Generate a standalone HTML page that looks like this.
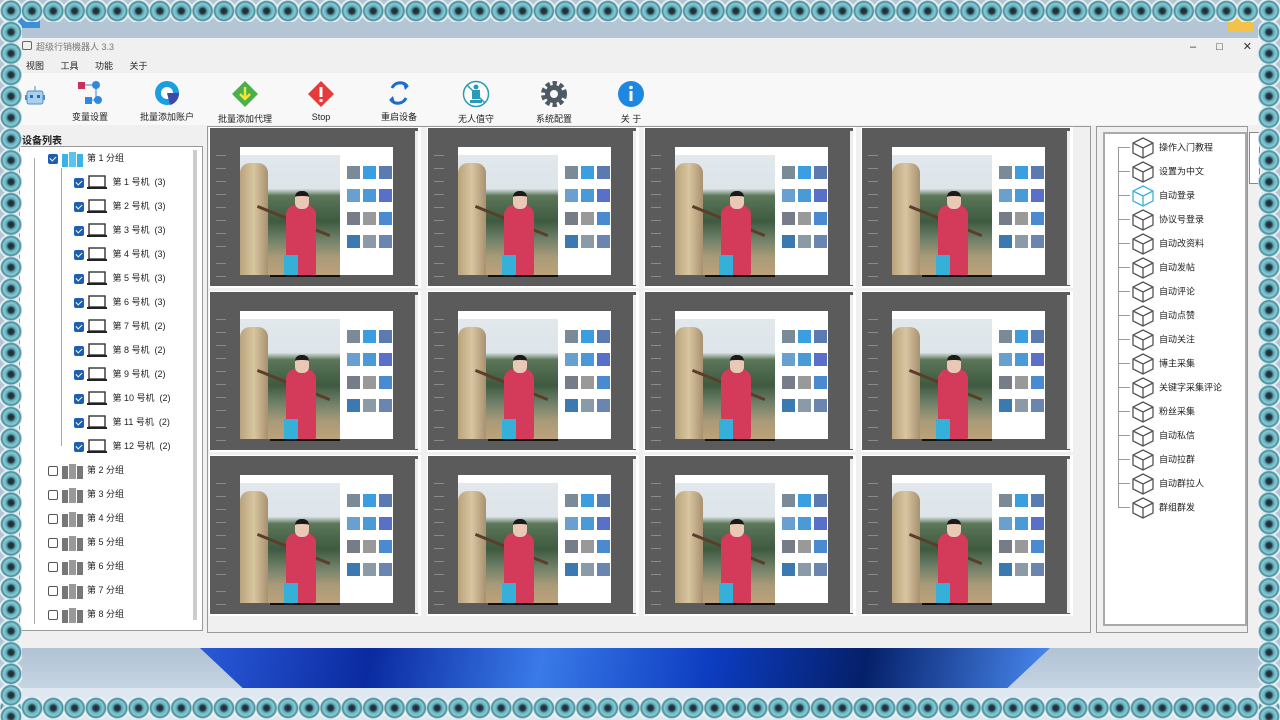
<!DOCTYPE html>
<html><head><meta charset="utf-8"><style>
*{margin:0;padding:0;box-sizing:border-box}
body{width:1280px;height:720px;overflow:hidden;position:relative;background:#b4c6d6;font-family:"Liberation Sans","Noto Sans CJK SC",sans-serif;font-size:9px;color:#222}
.a{position:absolute}
.bead{background-image:radial-gradient(circle at 50% 50%,#1a2a30 0,#2a3a40 18%,#5aa8b8 30%,#8ccbd4 48%,#3f8898 62%,#d6e6ea 70%,#f4f8fa 76%,transparent 82%)}
.win{left:18px;top:38px;width:1244px;height:610px;background:#f0f0f0}
.cell{position:absolute;width:212px;height:161px;background:#fff}
.cell .d{position:absolute;left:1px;top:1px;width:208px;height:158px;background:#5b5b5b}
.cell .sb{position:absolute;left:206px;top:4px;width:3px;height:154px;background:#eee}
.pop{position:absolute;left:30px;top:19px;width:153px;height:128px;background:#fff}
.photo{position:absolute;left:30px;top:27px;width:100px;height:120px;background:linear-gradient(180deg,#e2e8ec 0,#dde5ea 28%,#5b7658 34%,#3e5a40 55%,#6f8068 70%,#a99a78 85%,#bca27a 100%)}
.hay{position:absolute;left:0;top:8px;width:28px;height:112px;background:linear-gradient(90deg,#b9a37c,#d8c6a0,#a89070);border-radius:10px 10px 0 0}
.girl{position:absolute;left:46px;top:50px;width:30px;height:70px;background:#d43a5a;border-radius:10px 10px 2px 2px}
.head{position:absolute;left:55px;top:36px;width:14px;height:18px;background:#e9c9b6;border-radius:6px;border-top:5px solid #1a1a1a}
.skirt{position:absolute;left:44px;top:100px;width:14px;height:20px;background:#35b0d8}
.pole{position:absolute;left:18px;top:50px;width:78px;height:3px;background:#5a3e2a;transform:rotate(22deg);transform-origin:0 0}
.th{position:absolute;width:13px;height:13px;background:#6fa7c8}
.bar{position:absolute;left:60px;top:145px;width:70px;height:4px;background:#111}
.side{position:absolute;left:6px;width:10px;height:1px;background:#8a8a8a}
.tool{position:absolute;top:80px;text-align:center;width:80px;font-size:9px}
.tool svg{display:block;margin:0 auto 4px}
.row{position:absolute;height:16px;line-height:16px;white-space:nowrap}
.cb{display:inline-block;width:10px;height:10px;background:#1a5fb4;border-radius:2px;vertical-align:middle;position:relative}
.cb:after{content:"";position:absolute;left:3px;top:1px;width:3px;height:5px;border:solid #fff;border-width:0 1px 1px 0;transform:rotate(45deg)}
.ucb{display:inline-block;width:10px;height:10px;border:1px solid #555;border-radius:2px;vertical-align:middle;background:#fff}
.lap{display:inline-block;width:20px;height:15px;vertical-align:middle;margin:0 3px}
.rt{position:absolute;left:1124px;height:20px;line-height:20px;white-space:nowrap}
.rt svg{vertical-align:middle;margin-right:5px}
</style></head><body>
<div class="a" style="left:18px;top:10px;width:22px;height:18px;background:#3a8fd8"></div>
<div class="a" style="left:1228px;top:16px;width:26px;height:16px;background:#f3c24a"></div>
<div class="a win"></div>
<div class="a" style="left:22px;top:41px;width:10px;height:9px;border:1px solid #666;border-radius:2px"></div>
<div class="a" style="left:36px;top:40px;color:#777;font-size:9px">超级行销機器人 3.3</div>
<div class="a" style="left:1190px;top:40px;color:#333;font-size:11px;letter-spacing:20px">–□✕</div>
<div class="a" style="left:26px;top:59px;font-size:9px;word-spacing:14px">视图 工具 功能 关于</div>
<div class="a" style="left:18px;top:73px;width:1244px;height:52px;background:#f8f8f8"></div>
<svg class="a" style="left:24px;top:85px" width="22" height="22"><line x1="11" y1="1" x2="11" y2="6" stroke="#4a90c8"/><rect x="3" y="6" width="16" height="13" rx="2" fill="#a9d0ee" stroke="#4a90c8"/><rect x="6" y="10" width="3" height="3" fill="#2a6aa8"/><rect x="13" y="10" width="3" height="3" fill="#2a6aa8"/><rect x="1" y="10" width="2" height="5" fill="#4a90c8"/><rect x="19" y="10" width="2" height="5" fill="#4a90c8"/></svg>
<div class="tool" style="left:50px"><svg width="26" height="26"><rect x="1" y="2" width="7" height="7" fill="#c8325a"/><circle cx="19" cy="5" r="4" fill="#2d8ae0"/><rect x="8" y="17" width="7" height="7" fill="#2d8ae0"/><circle cx="21" cy="20" r="4" fill="#2d8ae0"/><path d="M8 5H19V20H15" stroke="#2d8ae0" fill="none"/></svg>变量设置</div>
<div class="tool" style="left:127px"><svg width="26" height="26"><circle cx="13" cy="13" r="12" fill="#1aa0e0"/><circle cx="13" cy="13" r="6" fill="#fff"/><path d="M13 13L25 13A12 12 0 0 1 16 25Z" fill="#3c4aa8"/></svg>批量添加账户</div>
<div class="tool" style="left:205px"><svg width="28" height="28"><path d="M14 1L27 14L14 27L1 14Z" fill="#49b04a"/><path d="M14 7V19M9 14L14 19L19 14" stroke="#f6e23a" stroke-width="2.5" fill="none"/></svg>批量添加代理</div>
<div class="tool" style="left:281px"><svg width="28" height="28"><path d="M14 1L27 14L14 27L1 14Z" fill="#e43b3b"/><rect x="12.5" y="7" width="3" height="10" fill="#fff"/><rect x="12.5" y="19" width="3" height="3" fill="#fff"/></svg>Stop</div>
<div class="tool" style="left:359px"><svg width="26" height="26"><path d="M6 8A9 9 0 0 1 21 6M20 18A9 9 0 0 1 5 20" stroke="#1e6cc8" stroke-width="3" fill="none"/><path d="M17 3L23 6L19 10Z M9 23L3 20L7 16Z" fill="#1e6cc8"/></svg>重启设备</div>
<div class="tool" style="left:436px"><svg width="28" height="28"><circle cx="14" cy="14" r="12.5" fill="#fff" stroke="#2a9ab8" stroke-width="1.5"/><circle cx="14" cy="7" r="2.5" fill="#2a9ab8"/><rect x="10" y="10" width="8" height="9" fill="#2a9ab8"/><rect x="8" y="20" width="12" height="3" fill="#2a9ab8"/><line x1="5" y1="5" x2="23" y2="23" stroke="#2a9ab8" stroke-width="1.5"/></svg>无人值守</div>
<div class="tool" style="left:514px"><svg width="28" height="28"><circle cx="14" cy="14" r="10" fill="none" stroke="#4d5a66" stroke-width="6" stroke-dasharray="4 2.5"/><circle cx="14" cy="14" r="9" fill="#4d5a66"/><circle cx="14" cy="14" r="4" fill="#f8f8f8"/></svg>系统配置</div>
<div class="tool" style="left:591px"><svg width="28" height="28"><circle cx="14" cy="14" r="13" fill="#1e88e0"/><rect x="12.5" y="11" width="3" height="10" fill="#fff"/><circle cx="14" cy="7.5" r="1.8" fill="#fff"/></svg>关 于</div>
<div class="a" style="left:22px;top:132px;font-weight:bold;font-size:10px">设备列表</div>
<div class="a" style="left:19px;top:146px;width:184px;height:485px;background:#fff;border:1px solid #999"></div>
<div class="a" style="left:193px;top:150px;width:4px;height:470px;background:#ccc"></div>
<div class="a" style="left:34px;top:158px;width:1px;height:466px;background:#aaa"></div>
<div class="a" style="left:61px;top:168px;width:1px;height:278px;background:#aaa"></div>
<div id="tree"></div>
<div class="a" style="left:207px;top:126px;width:884px;height:507px;border:1px solid #999;background:#f0f0f0"></div>
<div id="grid"></div>
<div class="a" style="left:1096px;top:126px;width:152px;height:507px;border:1px solid #999;background:#f0f0f0"></div>
<div class="a" style="left:1103px;top:132px;width:144px;height:494px;border:2px solid #aaa;background:#fff"></div>
<div class="a" style="left:1249px;top:132px;width:11px;height:52px;border:1px solid #888;background:#fff"></div>
<div class="a" style="left:1118px;top:147px;width:1px;height:360px;background:#999"></div>
<div id="rtree"></div>
<div class="a" style="left:0;top:648px;width:1280px;height:40px;background:linear-gradient(180deg,#b0c2d4,#c6d4e2)"></div>
<div class="a" style="left:200px;top:648px;width:850px;height:40px;background:linear-gradient(100deg,#2a5ad8 0,#0a2aa0 20%,#3a7ae8 40%,#0c3cc0 60%,#05206a 78%,#4a8af0 100%);clip-path:polygon(0 0,100% 0,95% 100%,5% 100%)"></div>
<div class="a" style="left:0;top:688px;width:1280px;height:32px;background:#dfe7f0"></div>
<div class="a bead" style="left:0;top:0;width:1280px;height:22px;background-size:21.33px 22px;background-repeat:repeat-x"></div>
<div class="a bead" style="left:0;top:697px;width:1280px;height:22px;background-size:21.33px 22px;background-repeat:repeat-x"></div>
<div class="a bead" style="left:0;top:0;width:22px;height:720px;background-size:22px 21.4px;background-repeat:repeat-y"></div>
<div class="a bead" style="left:1258px;top:0;width:22px;height:720px;background-size:22px 21.4px;background-repeat:repeat-y"></div>
<script>
var lap='<svg class="lap"><rect x="2" y="1" width="16" height="11" fill="none" stroke="#222" stroke-width="1.3"/><rect x="0" y="12" width="20" height="2" fill="#222"/></svg>';
function grp(c){return '<svg width="24" height="16" style="vertical-align:middle"><rect x="1" y="3" width="6" height="13" fill="'+c[0]+'"/><rect x="8" y="1" width="7" height="15" fill="'+c[1]+'"/><rect x="16" y="3" width="6" height="13" fill="'+c[0]+'"/></svg>';}
var tr='<div class="row" style="left:48px;top:150px"><span class="cb"></span> '+grp(['#3ab4e0','#5ac4ec'])+' 第 1 分组</div>';
var cnt=[3,3,3,3,3,3,2,2,2,2,2,2];
for(var i=0;i<12;i++)tr+='<div class="row" style="left:74px;top:'+(174+i*24)+'px"><span class="cb"></span>'+lap+' 第 '+(i+1)+' 号机 &nbsp;('+cnt[i]+')</div>';
for(var k=2;k<=8;k++)tr+='<div class="row" style="left:48px;top:'+(462+(k-2)*24)+'px"><span class="ucb"></span> '+grp(['#777','#999'])+' 第 '+k+' 分组</div>';
document.getElementById('tree').innerHTML=tr;
var g='',xs=[209,427,644,861],ys=[127,291,455];
var cols=['#7a8a96','#3a9ee0','#5a7ab0','#6aa0d0','#4a9ad8','#5a70c8','#777d88','#999','#4a8ad0','#3a7ab0','#8a9aa6','#6a86b0'];
ys.forEach(function(y){xs.forEach(function(x){
var t='';for(var i=0;i<12;i++){t+='<div class="th" style="left:'+(107+(i%3)*16)+'px;top:'+(19+Math.floor(i/3)*23)+'px;background:'+cols[i]+'"></div>';}
var s='';for(var j=0;j<8;j++){s+='<div class="side" style="top:'+(27+j*13)+'px"></div>';}
g+='<div class="cell" style="left:'+x+'px;top:'+y+'px"><div class="d">'+s+'<div class="side" style="top:135px"></div><div class="side" style="top:148px"></div><div class="bar"></div><div class="pop">'+t+'</div><div class="photo"><div class="hay"></div><div class="pole"></div><div class="girl"></div><div class="head"></div><div class="skirt"></div></div></div><div class="sb"></div></div>';
});});
document.getElementById('grid').innerHTML=g;
var names=['操作入门教程','设置为中文','自动登录','协议号登录','自动改资料','自动发帖','自动评论','自动点赞','自动关注','博主采集','关键字采集评论','粉丝采集','自动私信','自动拉群','自动群拉人','群组群发'];
var r='';names.forEach(function(n,i){var c=i==2?'#3ab4d8':'#555';
r+='<div class="a" style="left:1118px;top:'+(147+i*24)+'px;width:12px;height:1px;background:#999"></div><div class="rt" style="left:1132px;top:'+(137+i*24)+'px"><svg width="22" height="22"><path d="M11 1L21 6V16L11 21L1 16V6Z M1 6L11 11L21 6 M11 11V21" fill="none" stroke="'+c+'" stroke-width="1.3"/></svg>'+n+'</div>';});
document.getElementById('rtree').innerHTML=r;
</script>
</body></html>
